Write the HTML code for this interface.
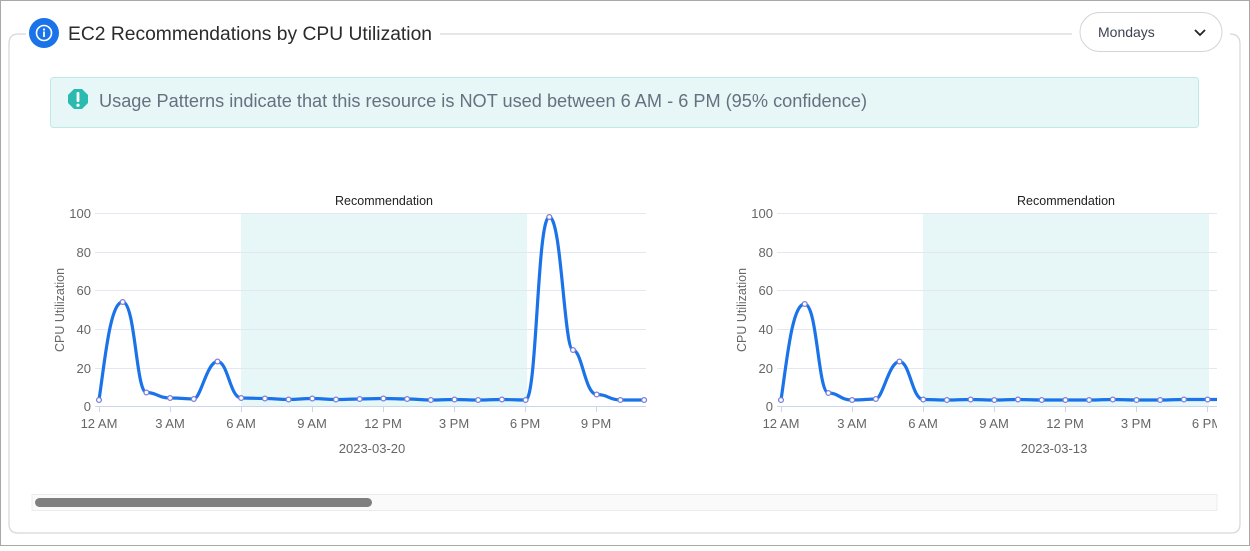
<!DOCTYPE html>
<html><head><meta charset="utf-8"><style>
html,body{margin:0;padding:0;background:#fff;}
body{width:1250px;height:546px;overflow:hidden;position:relative;font-family:"Liberation Sans",Arial,sans-serif;}
</style></head><body>
<svg width="1250" height="546" viewBox="0 0 1250 546" xmlns="http://www.w3.org/2000/svg" font-family="Liberation Sans, Arial, sans-serif">
<defs><clipPath id="c2"><rect x="700" y="150" width="517" height="330"/></clipPath></defs>
<rect x="0.5" y="0.5" width="1249" height="545" fill="#fff" stroke="#a8a8a8"/>
<path d="M440,34 H1072 M1230,34 Q1240,34 1240,44 V524 Q1240,533 1231,533 H18 Q9,533 9,524 V44 Q9,34 18,34 H26" fill="none" stroke="#d8d8dc" stroke-width="1.3"/>
<circle cx="44" cy="33" r="15" fill="#1a73e8"/>
<circle cx="44" cy="33" r="7.5" fill="none" stroke="#fff" stroke-width="1.6"/>
<circle cx="44" cy="29.5" r="1.1" fill="#fff"/>
<rect x="43.1" y="31.5" width="1.8" height="5.5" fill="#fff"/>
<text x="68" y="40" font-size="19.3" fill="#2b2b2b" textLength="364" lengthAdjust="spacingAndGlyphs">EC2 Recommendations by CPU Utilization</text>
<rect x="1080" y="12.5" width="142" height="39" rx="19.5" fill="#fff" stroke="#d4d4d8"/>
<text x="1098" y="37" font-size="14" fill="#3b4450">Mondays</text>
<path d="M1195,30 l5,5 l5,-5" fill="none" stroke="#222" stroke-width="1.8"/>
<rect x="50.5" y="77.5" width="1148" height="50" rx="3" fill="#e7f7f7" stroke="#bfe9e7"/>
<polygon points="74,89 82,89 88,95 88,103 82,109 74,109 68,103 68,95" fill="#2bbab0"/>
<rect x="76.6" y="92" width="2.8" height="10" rx="1" fill="#fff"/>
<circle cx="78" cy="105.2" r="1.6" fill="#fff"/>
<text x="99" y="107" font-size="18" fill="#667180" textLength="768" lengthAdjust="spacingAndGlyphs">Usage Patterns indicate that this resource is NOT used between 6 AM - 6 PM (95% confidence)</text>

<g font-size="13" fill="#666">
<rect x="241" y="213" width="286" height="193" fill="#e7f7f7"/>
<g stroke="#e3e8f0" stroke-width="1">
<line x1="95" y1="213.5" x2="646" y2="213.5"/><line x1="95" y1="252.5" x2="646" y2="252.5"/><line x1="95" y1="290.5" x2="646" y2="290.5"/><line x1="95" y1="329.5" x2="646" y2="329.5"/><line x1="95" y1="368.5" x2="646" y2="368.5"/>
</g>
<line x1="95" y1="406.5" x2="646" y2="406.5" stroke="#ccd6eb"/>
<g stroke="#ccd6eb"><line x1="99.5" y1="406" x2="99.5" y2="412"/><line x1="170.5" y1="406" x2="170.5" y2="412"/><line x1="241.5" y1="406" x2="241.5" y2="412"/><line x1="312.5" y1="406" x2="312.5" y2="412"/><line x1="383.5" y1="406" x2="383.5" y2="412"/><line x1="454.5" y1="406" x2="454.5" y2="412"/><line x1="525.5" y1="406" x2="525.5" y2="412"/><line x1="596.5" y1="406" x2="596.5" y2="412"/></g>
<g text-anchor="end"><text x="91" y="218">100</text><text x="91" y="257">80</text><text x="91" y="295">60</text><text x="91" y="334">40</text><text x="91" y="373">20</text><text x="91" y="411">0</text></g>
<g text-anchor="middle"><text x="99" y="428">12 AM</text><text x="170" y="428">3 AM</text><text x="241" y="428">6 AM</text><text x="312" y="428">9 AM</text><text x="383" y="428">12 PM</text><text x="454" y="428">3 PM</text><text x="525" y="428">6 PM</text><text x="596" y="428">9 PM</text>
<text x="372" y="453">2023-03-20</text>
<text x="384" y="205" fill="#222" font-size="12.5">Recommendation</text></g>
<text transform="translate(64,310) rotate(-90)" text-anchor="middle" font-size="12.5">CPU Utilization</text>
<path d="M99,400 C105,360 110,302 122.7,302 S136,392.5 146.4,392.5 S158,398 170.1,398 S187,399 193.8,399 S207,361.5 217.5,361.5 S230,398 241.2,398 S253,398.5 264.9,398.5 S277,399.5 288.6,399.5 S300,398.5 312.3,398.5 S324,399.5 336,399.5 S348,399 359.7,399 S371,398.5 383.4,398.5 S395,399 407.1,399 S419,400 430.8,400 S443,399.5 454.5,399.5 S466,400 478.2,400 S490,399.5 501.9,399.5 S514,400 525.6,400 S537,217 549.3,217 S564,350 573,350 S585,394.5 596.7,394.5 S609,400 620.4,400 S632,400 644.1,400 L646,400" fill="none" stroke="#1a73e8" stroke-width="3.2"/>
<g fill="#fff" stroke="#7b7fd8" stroke-width="1.3">
<circle cx="99" cy="400" r="2.4"/><circle cx="122.7" cy="302" r="2.4"/><circle cx="146.4" cy="392.5" r="2.4"/><circle cx="170.1" cy="398" r="2.4"/><circle cx="193.8" cy="399" r="2.4"/><circle cx="217.5" cy="361.5" r="2.4"/><circle cx="241.2" cy="398" r="2.4"/><circle cx="264.9" cy="398.5" r="2.4"/><circle cx="288.6" cy="399.5" r="2.4"/><circle cx="312.3" cy="398.5" r="2.4"/><circle cx="336" cy="399.5" r="2.4"/><circle cx="359.7" cy="399" r="2.4"/><circle cx="383.4" cy="398.5" r="2.4"/><circle cx="407.1" cy="399" r="2.4"/><circle cx="430.8" cy="400" r="2.4"/><circle cx="454.5" cy="399.5" r="2.4"/><circle cx="478.2" cy="400" r="2.4"/><circle cx="501.9" cy="399.5" r="2.4"/><circle cx="525.6" cy="400" r="2.4"/><circle cx="549.3" cy="217" r="2.4"/><circle cx="573" cy="350" r="2.4"/><circle cx="596.7" cy="394.5" r="2.4"/><circle cx="620.4" cy="400" r="2.4"/><circle cx="644.1" cy="400" r="2.4"/>
</g>
</g>

<g font-size="13" fill="#666">
<g clip-path="url(#c2)">
<rect x="923" y="213" width="286" height="193" fill="#e7f7f7"/>
<g stroke="#e3e8f0" stroke-width="1">
<line x1="777" y1="213.5" x2="1217" y2="213.5"/><line x1="777" y1="252.5" x2="1217" y2="252.5"/><line x1="777" y1="290.5" x2="1217" y2="290.5"/><line x1="777" y1="329.5" x2="1217" y2="329.5"/><line x1="777" y1="368.5" x2="1217" y2="368.5"/>
</g>
<line x1="777" y1="406.5" x2="1217" y2="406.5" stroke="#ccd6eb"/>
<g stroke="#ccd6eb"><line x1="781.5" y1="406" x2="781.5" y2="412"/><line x1="852.5" y1="406" x2="852.5" y2="412"/><line x1="923.5" y1="406" x2="923.5" y2="412"/><line x1="994.5" y1="406" x2="994.5" y2="412"/><line x1="1065.5" y1="406" x2="1065.5" y2="412"/><line x1="1136.5" y1="406" x2="1136.5" y2="412"/><line x1="1207.5" y1="406" x2="1207.5" y2="412"/></g>
<g text-anchor="middle"><text x="781" y="428">12 AM</text><text x="852" y="428">3 AM</text><text x="923" y="428">6 AM</text><text x="994" y="428">9 AM</text><text x="1065" y="428">12 PM</text><text x="1136" y="428">3 PM</text><text x="1207" y="428">6 PM</text>
<text x="1054" y="453">2023-03-13</text>
<text x="1066" y="205" fill="#222" font-size="12.5">Recommendation</text></g>
<path d="M781,400 C787,360 792,304 804.7,304 S818,393 828.4,393 S840,400 852.1,400 S869,399 875.8,399 S889,361.5 899.5,361.5 S912,399.5 923.2,399.5 S935,400 946.9,400 S959,399.5 970.6,399.5 S982,400 994.3,400 S1006,399.5 1018,399.5 S1030,400 1041.7,400 S1053,400 1065.4,400 S1077,400 1089.1,400 S1101,399.5 1112.8,399.5 S1125,400 1136.5,400 S1148,400 1160.2,400 S1172,399.5 1183.9,399.5 S1196,399.5 1207.6,399.5 L1225,399.5" fill="none" stroke="#1a73e8" stroke-width="3.2"/>
<g fill="#fff" stroke="#7b7fd8" stroke-width="1.3">
<circle cx="781" cy="400" r="2.4"/><circle cx="804.7" cy="304" r="2.4"/><circle cx="828.4" cy="393" r="2.4"/><circle cx="852.1" cy="400" r="2.4"/><circle cx="875.8" cy="399" r="2.4"/><circle cx="899.5" cy="361.5" r="2.4"/><circle cx="923.2" cy="399.5" r="2.4"/><circle cx="946.9" cy="400" r="2.4"/><circle cx="970.6" cy="399.5" r="2.4"/><circle cx="994.3" cy="400" r="2.4"/><circle cx="1018" cy="399.5" r="2.4"/><circle cx="1041.7" cy="400" r="2.4"/><circle cx="1065.4" cy="400" r="2.4"/><circle cx="1089.1" cy="400" r="2.4"/><circle cx="1112.8" cy="399.5" r="2.4"/><circle cx="1136.5" cy="400" r="2.4"/><circle cx="1160.2" cy="400" r="2.4"/><circle cx="1183.9" cy="399.5" r="2.4"/><circle cx="1207.6" cy="399.5" r="2.4"/>
</g>
</g>
<g text-anchor="end"><text x="773" y="218">100</text><text x="773" y="257">80</text><text x="773" y="295">60</text><text x="773" y="334">40</text><text x="773" y="373">20</text><text x="773" y="411">0</text></g>
<text transform="translate(746,310) rotate(-90)" text-anchor="middle" font-size="12.5">CPU Utilization</text>
</g>

<rect x="32" y="494.5" width="1185" height="16" fill="#fafafa" stroke="#ececec"/>
<rect x="35" y="498" width="337" height="9" rx="4.5" fill="#7f7f7f"/>
</svg>
</body></html>
